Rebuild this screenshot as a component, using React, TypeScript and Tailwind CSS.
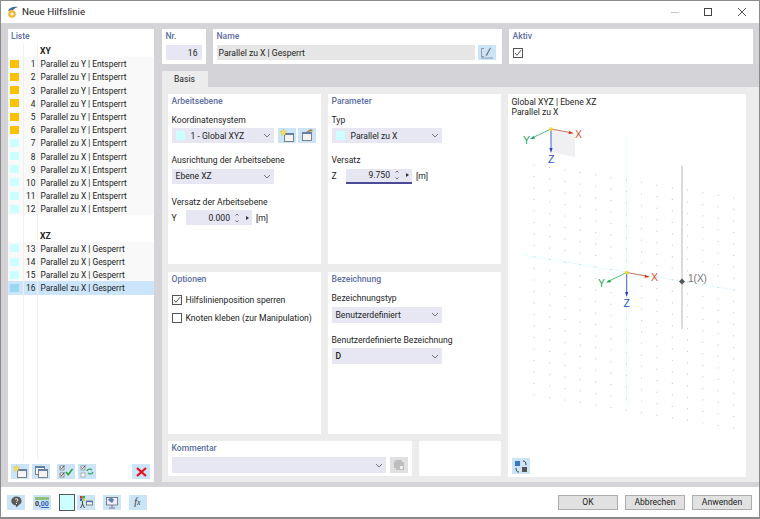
import type { ReactNode } from 'react'

type Row = { nr: number; text: string; color: 'amber' | 'cyan' }

const XY_ROWS: Row[] = [
  ...[1, 2, 3, 4, 5, 6].map((nr): Row => ({ nr, text: 'Parallel zu Y | Entsperrt', color: 'amber' })),
  ...[7, 8, 9, 10, 11, 12].map((nr): Row => ({ nr, text: 'Parallel zu X | Entsperrt', color: 'cyan' })),
]
const XZ_ROWS: Row[] = [13, 14, 15, 16].map((nr) => ({ nr, text: 'Parallel zu X | Gesperrt', color: 'cyan' }))

function ListRow({ row, selected }: { row: Row; selected?: boolean }) {
  const swatch = selected ? 'bg-[#99d8f0]' : row.color === 'amber' ? 'bg-[#fcc200]' : 'bg-[#ccffff]'
  return (
    <div className={`flex h-[13.2px] items-center ${selected ? 'bg-[#cce5fa]' : 'bg-[#f9f9f9]'}`}>
      <span className={`ml-[2px] h-[8px] w-[8.5px] ${swatch}`} />
      <span className="w-[17px] pt-[1px] text-right text-[8.4px]">{row.nr}</span>
      <span className="ml-[5px] pt-[1px] text-[8.4px] whitespace-nowrap">{row.text}</span>
    </div>
  )
}

function Heading({ children }: { children: ReactNode }) {
  return <div className="font-medium text-[#5d70a3]">{children}</div>
}

function Chevron() {
  return (
    <svg width="8" height="5" viewBox="0 0 8 5" className="shrink-0">
      <path d="M1 1l3 3 3-3" fill="none" stroke="#666" strokeWidth="0.9" />
    </svg>
  )
}

function Select({ text, className, swatch }: { text?: string; className: string; swatch?: boolean }) {
  return (
    <div className={`flex items-center bg-[#e7e7f3] pl-[4px] pr-[3px] ${className}`}>
      {swatch && <span className="mr-[6px] ml-[0px] h-[9px] w-[9px] bg-[#ccffff]" />}
      <span className="flex-1 whitespace-nowrap">{text}</span>
      <Chevron />
    </div>
  )
}

function Spinner({ axis, value, active }: { axis: string; value: string; active?: boolean }) {
  return (
    <div className="flex h-[15px] items-center">
      <span className="w-[14.5px]">{axis}</span>
      <div
        className={`flex h-[15px] w-[66px] items-center bg-[#e7e7f3] ${active ? 'border-b-2 border-[#4b4a96]' : ''}`}
      >
        <span className="w-[44px] text-right">{value}</span>
        <svg width="22" height="12" viewBox="0 0 22 12">
          <path d="M5.500 3.500L7 2l1.500 1.500M5.500 8.500L7 10l1.500-1.500" fill="none" stroke="#555" strokeWidth="0.8" />
          <path d="M16 4l3 2-3 2z" fill="#333" />
        </svg>
      </div>
      <span className="ml-[4px]">[m]</span>
    </div>
  )
}

function Check({ checked }: { checked?: boolean }) {
  return (
    <span className="flex h-[10px] w-[10px] shrink-0 items-center justify-center border border-[#555] bg-white">
      {checked && (
        <svg width="8" height="8" viewBox="0 0 8 8">
          <path d="M1 4l2 2.300L7 1.200" fill="none" stroke="#444" strokeWidth="0.9" />
        </svg>
      )}
    </span>
  )
}

function Field({ label, children, className }: { label: string; children: ReactNode; className?: string }) {
  return (
    <div className={className}>
      <div className="leading-[12px]">{label}</div>
      <div className="mt-[2.500px]">{children}</div>
    </div>
  )
}

function IconButton({ children, className }: { children: ReactNode; className?: string }) {
  return (
    <div className={`flex h-[15px] w-[18px] shrink-0 items-center justify-center bg-[#cce4f7] ${className ?? ''}`}>
      {children}
    </div>
  )
}

function Win({ x = 0, y = 0, w = 9, h = 8 }: { x?: number; y?: number; w?: number; h?: number }) {
  return (
    <g>
      <rect x={x + 0.5} y={y + 0.5} width={w} height={h} fill="#f4f4f4" stroke="#666" strokeWidth="0.8" />
      <rect x={x + 0.5} y={y + 0.5} width={w} height="1.500" fill="#5a80b8" />
    </g>
  )
}

function Ico({ children }: { children: ReactNode }) {
  return (
    <svg width="14" height="13" viewBox="0 0 14 13">
      {children}
    </svg>
  )
}

const Star = () => <path d="M3.500 0l1 2.200 2.400.3-1.800 1.500.5 2.400-2.100-1.200-2.100 1.200.5-2.400L0 2.500l2.400-.3z" fill="#f4e34a" stroke="#c9b020" strokeWidth="0.3" />

function NewWindowIcon() {
  return (
    <Ico>
      <Win x={4} y={4} />
      <Star />
    </Ico>
  )
}

function CopyIcon() {
  return (
    <Ico>
      <Win x={1} y={1} />
      <Win x={4} y={4} />
    </Ico>
  )
}

function CheckAllIcon() {
  return (
    <Ico>
      <rect x="1" y="1" width="4" height="4" fill="#fff" stroke="#666" strokeWidth="0.7" />
      <rect x="1" y="8" width="4" height="4" fill="#fff" stroke="#666" strokeWidth="0.7" />
      <path d="M1.500 2.500l1.200 1.300 2.600-3.300M1.500 9.500l1.200 1.300 2.600-3.300" fill="none" stroke="#333" strokeWidth="0.8" />
      <path d="M7 7l2.200 2.800L13.500 4" fill="none" stroke="#1fa53a" strokeWidth="1.500" />
    </Ico>
  )
}

function SwapCheckIcon() {
  return (
    <Ico>
      <rect x="1" y="1" width="4" height="4" fill="#fff" stroke="#777" strokeWidth="0.7" />
      <rect x="1" y="8" width="4" height="4" fill="#fff" stroke="#999" strokeWidth="0.7" />
      <path d="M1.500 2.500l1.200 1.300 2.600-3.300" fill="none" stroke="#444" strokeWidth="0.8" />
      <path d="M7 6c.5-2 3.500-2.500 5-1M13 7c-.5 2-3.500 2.500-5 1" fill="none" stroke="#30a860" strokeWidth="1.200" />
    </Ico>
  )
}

function EditNameIcon() {
  return (
    <svg width="14" height="13" viewBox="0 0 14 13">
      <path d="M4 2.500H1.500v8H4M1 12h12" fill="none" stroke="#778" strokeWidth="0.7" />
      <path d="M5.500 9.500L10 1.500l1 .6-4 7.700z" fill="#777" />
    </svg>
  )
}

function AxisGraphic() {
  const dots: { x: number; y: number }[] = []
  for (let col = 0; col < 14; col++) {
    const x = 534.3 + col * 15.33
    const top = 165 + (x - 534.3) * 0.165
    for (let r = 0; r < 21; r++) dots.push({ x, y: top + r * 11.5 })
  }
  return (
    <svg width="238" height="335" viewBox="508 116 238 335" className="shrink-0 font-['Liberation_Sans',sans-serif]">
      <path d="M523 255L735 290M626.700 138V405" stroke="#dcfbfb" strokeWidth="0.8" fill="none" />
      {dots.map((d, i) => (
        <rect key={i} x={d.x - 0.5} y={d.y - 0.5} width="1" height="1" fill="#c0c0c0" />
      ))}
      <path d="M682 166V329" stroke="#cfcfcf" strokeWidth="1.500" />
      <path d="M682 278.500l3 3-3 3-3-3z" fill="#55555f" />
      <text x="688" y="281.500" fontSize="10" fill="#777">1(X)</text>

      <path d="M551 129L575 134V157L551 152z" fill="#f0f0f3" />
      <path d="M551 129L570 132.500" stroke="#c96a4a" strokeWidth="0.9" />
      <path d="M574 133.300l-5-2.200-.4 3z" fill="#c8381a" />
      <text x="575" y="137.500" fontSize="10.500" fill="#d8502e">X</text>
      <path d="M551 129L534 137" stroke="#3cb86a" strokeWidth="0.9" />
      <path d="M530 139l5-.2-1.400-2.900z" fill="#1f9e4e" />
      <text x="523" y="144" fontSize="10.500" fill="#26a65b">Y</text>
      <path d="M551 129V148" stroke="#2a55c8" strokeWidth="0.9" />
      <path d="M551 153l-1.600-5h3.200z" fill="#1f44b8" />
      <text x="548" y="163" fontSize="10.500" fill="#2a55c8">Z</text>
      <circle cx="551" cy="129" r="1.800" fill="#f4d820" />

      <path d="M626.700 272.500L646 276" stroke="#c96a4a" strokeWidth="0.9" />
      <path d="M650 277l-5-2.200-.4 3z" fill="#c8381a" />
      <text x="651" y="281" fontSize="10.500" fill="#d8502e">X</text>
      <path d="M626.700 272.500L610 280.500" stroke="#3cb86a" strokeWidth="0.9" />
      <path d="M606 282.500l5-.2-1.400-2.900z" fill="#1f9e4e" />
      <text x="598" y="287" fontSize="10.500" fill="#26a65b">Y</text>
      <path d="M626.700 272.500V292" stroke="#2a55c8" strokeWidth="0.9" />
      <path d="M626.700 297l-1.600-5h3.200z" fill="#1f44b8" />
      <text x="623.500" y="306.500" fontSize="10.500" fill="#2a55c8">Z</text>
      <circle cx="626.700" cy="272.500" r="1.800" fill="#f4d820" />
    </svg>
  )
}

export default function App() {
  return (
    <div className="flex h-[519px] w-[760px] flex-col overflow-hidden border border-b-2 border-[#8a8a8a] bg-white font-['Roboto',sans-serif] text-[8.6px] leading-[12px] text-[#222]">
      {/* title bar */}
      <div className="flex h-[22px] shrink-0 items-center pl-[6px]">
        <svg width="12" height="13" viewBox="0 0 12 13">
          <path d="M1 5c1-3 5-5 10-4-3 1-4 2-5 3z" fill="#3c6e9a" />
          <circle cx="5" cy="8" r="3.800" fill="#f2b632" />
          <circle cx="5" cy="8" r="1.500" fill="#fff" />
        </svg>
        <span className="ml-[3px] text-[9.8px]">Neue Hilfslinie</span>
        <div className="ml-auto flex items-center">
          <span className="mr-[25px] h-px w-[8px] bg-[#c8c8c8]" />
          <span className="mr-[26px] h-[8px] w-[8px] border border-[#444]" />
          <svg width="8" height="8" viewBox="0 0 8 8" className="mr-[13px]">
            <path d="M0 0l8 8M8 0L0 8" stroke="#444" strokeWidth="0.9" />
          </svg>
        </div>
      </div>

      {/* body */}
      <div className="flex h-[464px] shrink-0 gap-[7.500px] bg-[#d3d3d8] pt-[6px] pb-[5px] pl-[7px]">
        {/* Liste */}
        <div className="relative flex w-[146px] shrink-0 flex-col bg-white">
          <div className="h-[15px] px-[3px] pt-[1px]">
            <Heading>Liste</Heading>
          </div>
          <div className="flex h-[13.2px] items-center pt-[1px] pl-[32px] font-bold">XY</div>
          {XY_ROWS.map((row) => (
            <ListRow key={row.nr} row={row} />
          ))}
          <div className="h-[13.2px]" />
          <div className="flex h-[13.2px] items-center pt-[1px] pl-[32px] font-bold">XZ</div>
          {XZ_ROWS.map((row) => (
            <ListRow key={row.nr} row={row} selected={row.nr === 16} />
          ))}
          <span className="absolute top-[14px] left-[15px] h-[417px] w-px bg-[#f0f0f0]" />
          <span className="absolute top-[14px] left-[29px] h-[417px] w-px bg-[#f0f0f0]" />
          <div className="mt-auto mb-[3px] flex items-center pl-[3px]">
            <IconButton>
              <NewWindowIcon />
            </IconButton>
            <IconButton className="ml-[3px]">
              <CopyIcon />
            </IconButton>
            <IconButton className="ml-[7px]">
              <CheckAllIcon />
            </IconButton>
            <IconButton className="ml-[3px]">
              <SwapCheckIcon />
            </IconButton>
            <IconButton className="ml-[36px]">
              <svg width="11" height="10" viewBox="0 0 11 10">
                <path d="M1 1l9 8M10 1L1 9" stroke="#e8101c" strokeWidth="2.200" />
              </svg>
            </IconButton>
          </div>
        </div>

        {/* right side */}
        <div className="flex w-[598px] shrink-0 flex-col">
          <div className="flex h-[35px] shrink-0">
            <div className="w-[44px] bg-white px-[4px] pt-[1px]">
              <Heading>Nr.</Heading>
              <div className="mt-[3px] flex h-[15px] items-center justify-end bg-[#e7e7f3] pr-[4px]">16</div>
            </div>
            <div className="ml-[7px] flex w-[289px] flex-col bg-white px-[4px] pt-[1px]">
              <Heading>Name</Heading>
              <div className="mt-[3px] flex items-center gap-[3px]">
                <div className="flex h-[15px] w-[258.500px] items-center bg-[#e6e6e6] pl-[2px]">Parallel zu X | Gesperrt</div>
                <IconButton>
                  <EditNameIcon />
                </IconButton>
              </div>
            </div>
            <div className="ml-[7px] w-[244.500px] bg-white px-[4px] pt-[1px]">
              <Heading>Aktiv</Heading>
              <div className="mt-[6px]">
                <Check checked />
              </div>
            </div>
          </div>

          <div className="mt-[7px] flex h-[16px] w-[46px] shrink-0 items-center justify-center bg-[#ececec]">Basis</div>

          <div className="flex min-h-0 flex-1 gap-[7px] bg-[#ececec] px-[6px] pt-[7px]">
            <div className="flex w-[333px] shrink-0 flex-col">
              <div className="flex h-[170px] shrink-0 gap-[7px]">
                <div className="w-[153px] bg-white px-[4px] pt-[1px]">
                  <Heading>Arbeitsebene</Heading>
                  <Field label="Koordinatensystem" className="mt-[6.500px]">
                    <div className="flex items-center">
                      <Select text="1 - Global XYZ" swatch className="h-[15px] w-[102.500px]" />
                      <IconButton className="ml-[4px]">
                        <NewWindowIcon />
                      </IconButton>
                      <IconButton className="ml-[2px]">
                        <Ico>
                          <Win x={2} y={3} />
                          <path d="M6 3l5-3 2 2-5 1" fill="#b0783a" />
                        </Ico>
                      </IconButton>
                    </div>
                  </Field>
                  <Field label="Ausrichtung der Arbeitsebene" className="mt-[11px]">
                    <Select text="Ebene XZ" className="h-[15.500px] w-[102.500px]" />
                  </Field>
                  <Field label="Versatz der Arbeitsebene" className="mt-[11.500px]">
                    <Spinner axis="Y" value="0.000" />
                  </Field>
                </div>
                <div className="w-[173px] bg-white px-[4px] pt-[1px]">
                  <Heading>Parameter</Heading>
                  <Field label="Typ" className="mt-[6.500px]">
                    <Select text="Parallel zu X" swatch className="h-[15px] w-[110px]" />
                  </Field>
                  <Field label="Versatz" className="mt-[11px]">
                    <Spinner axis="Z" value="9.750" active />
                  </Field>
                </div>
              </div>

              <div className="mt-[8px] flex h-[162px] shrink-0 gap-[7px]">
                <div className="w-[153px] bg-white px-[4px] pt-[1px]">
                  <Heading>Optionen</Heading>
                  <label className="mt-[9px] flex items-center gap-[4px]">
                    <Check checked />
                    <span>Hilfslinienposition sperren</span>
                  </label>
                  <label className="mt-[6px] flex items-center gap-[4px]">
                    <Check />
                    <span className="whitespace-nowrap">Knoten kleben (zur Manipulation)</span>
                  </label>
                </div>
                <div className="w-[173px] bg-white px-[4px] pt-[1px]">
                  <Heading>Bezeichnung</Heading>
                  <Field label="Bezeichnungstyp" className="mt-[7px]">
                    <Select text="Benutzerdefiniert" className="h-[16px] w-[110px]" />
                  </Field>
                  <Field label="Benutzerdefinierte Bezeichnung" className="mt-[11px]">
                    <Select text="D" className="h-[16px] w-[110px] font-medium" />
                  </Field>
                </div>
              </div>

              <div className="mt-[7px] flex h-[35px] shrink-0 gap-[7px]">
                <div className="w-[244px] bg-white px-[4px] pt-[1px]">
                  <Heading>Kommentar</Heading>
                  <div className="mt-[3px] flex items-center gap-[4px]">
                    <Select className="h-[16px] w-[214px]" />
                    <div className="flex h-[16px] w-[18px] items-center justify-center bg-[#e0e0e0]">
                      <svg width="12" height="12" viewBox="0 0 12 12">
                        <path d="M1 3l2-2h6v2h2v8H3V9H1z" fill="#bdbdbd" />
                        <rect x="7" y="7" width="3" height="3" fill="#eee" />
                      </svg>
                    </div>
                  </div>
                </div>
                <div className="w-[82px] bg-white" />
              </div>
            </div>

            {/* graphic */}
            <div className="mb-[5px] flex w-[238px] shrink-0 flex-col bg-white">
              <div className="h-[22px] px-[4px] pt-[3px] leading-[10px]">
                <div>Global XYZ | Ebene XZ</div>
                <div>Parallel zu X</div>
              </div>
              <AxisGraphic />
              <div className="mt-auto mb-[3px] pl-[4px]">
                <IconButton className="h-[16px]">
                  <svg width="14" height="13" viewBox="0 0 14 13">
                    <rect x="1" y="1" width="5" height="5" fill="#3f74c4" />
                    <rect x="8" y="7" width="5" height="5" fill="#555" />
                    <path d="M9 1c2 0 3 1 3 4M5 12c-2 0-3-1-3-4" fill="none" stroke="#333" strokeWidth="0.9" />
                  </svg>
                </IconButton>
              </div>
            </div>
          </div>
        </div>
      </div>

      {/* footer */}
      <div className="flex min-h-0 flex-1 items-center pl-[6px]">
        <IconButton>
          <svg width="13" height="12" viewBox="0 0 13 12">
            <path d="M6.500 0.500a5 4.500 0 0 1 2.500 8.400L6 11.500V9.500a5 4.500 0 0 1 .5-9z" fill="#5a5a5a" />
            <path d="M5 3.500c.5-1 3-1 3 .5 0 1-1.500 1-1.500 2M6.500 7v1" fill="none" stroke="#fff" strokeWidth="1" />
          </svg>
        </IconButton>
        <IconButton className="ml-[8px]">
          <span className="flex flex-col items-center text-[7px] leading-[7px] font-bold text-[#333]">
            <span className="h-[3px] w-[14px] bg-[#8fc07a]" />
            <span className="mt-[1px]">
              0,<span className="text-[#2f62c0] underline">00</span>
            </span>
          </span>
        </IconButton>
        <span className="ml-[7.500px] h-[17px] w-[16px] shrink-0 border border-[#555] bg-[#ccffff]" />
        <IconButton className="ml-[2px]">
          <Ico>
            <rect x="1" y="0" width="2.500" height="2.500" fill="#d33" />
            <rect x="3.500" y="0" width="2.500" height="2.500" fill="#3a3" />
            <rect x="1" y="2.500" width="2.500" height="2.500" fill="#36c" />
            <rect x="3.500" y="2.500" width="2.500" height="2.500" fill="#dc3" />
            <path d="M3.500 5v3M1.500 12l2-4 2 4" fill="none" stroke="#333" strokeWidth="0.9" />
            <rect x="7.500" y="5" width="6" height="4" fill="#f4f4f4" stroke="#555" strokeWidth="0.7" />
            <rect x="7.500" y="5" width="6" height="1.200" fill="#4d78b8" />
          </Ico>
        </IconButton>
        <IconButton className="ml-[8px]">
          <Ico>
            <rect x="1.500" y="1.500" width="11" height="7.500" fill="#eef" stroke="#667" strokeWidth="0.8" />
            <path d="M3 4c2-3 5-2 6 0l-2 3z" fill="#5b7fb0" />
            <path d="M7 9v2M4 12h6" stroke="#667" strokeWidth="0.9" />
          </Ico>
        </IconButton>
        <IconButton className="ml-[8px]">
          <span className="relative font-['Liberation_Serif',serif] text-[10px] leading-[10px] text-[#333] italic">
            f<span className="text-[8px]">x</span>
          </span>
        </IconButton>
        <div className="mr-[7px] ml-auto flex gap-[7px]">
          {['OK', 'Abbrechen', 'Anwenden'].map((label) => (
            <button
              key={label}
              type="button"
              className="h-[15px] w-[60px] border border-[#adadad] bg-[#e1e1e1] text-[8.6px] leading-[12px] text-[#222]"
            >
              {label}
            </button>
          ))}
        </div>
      </div>
    </div>
  )
}
